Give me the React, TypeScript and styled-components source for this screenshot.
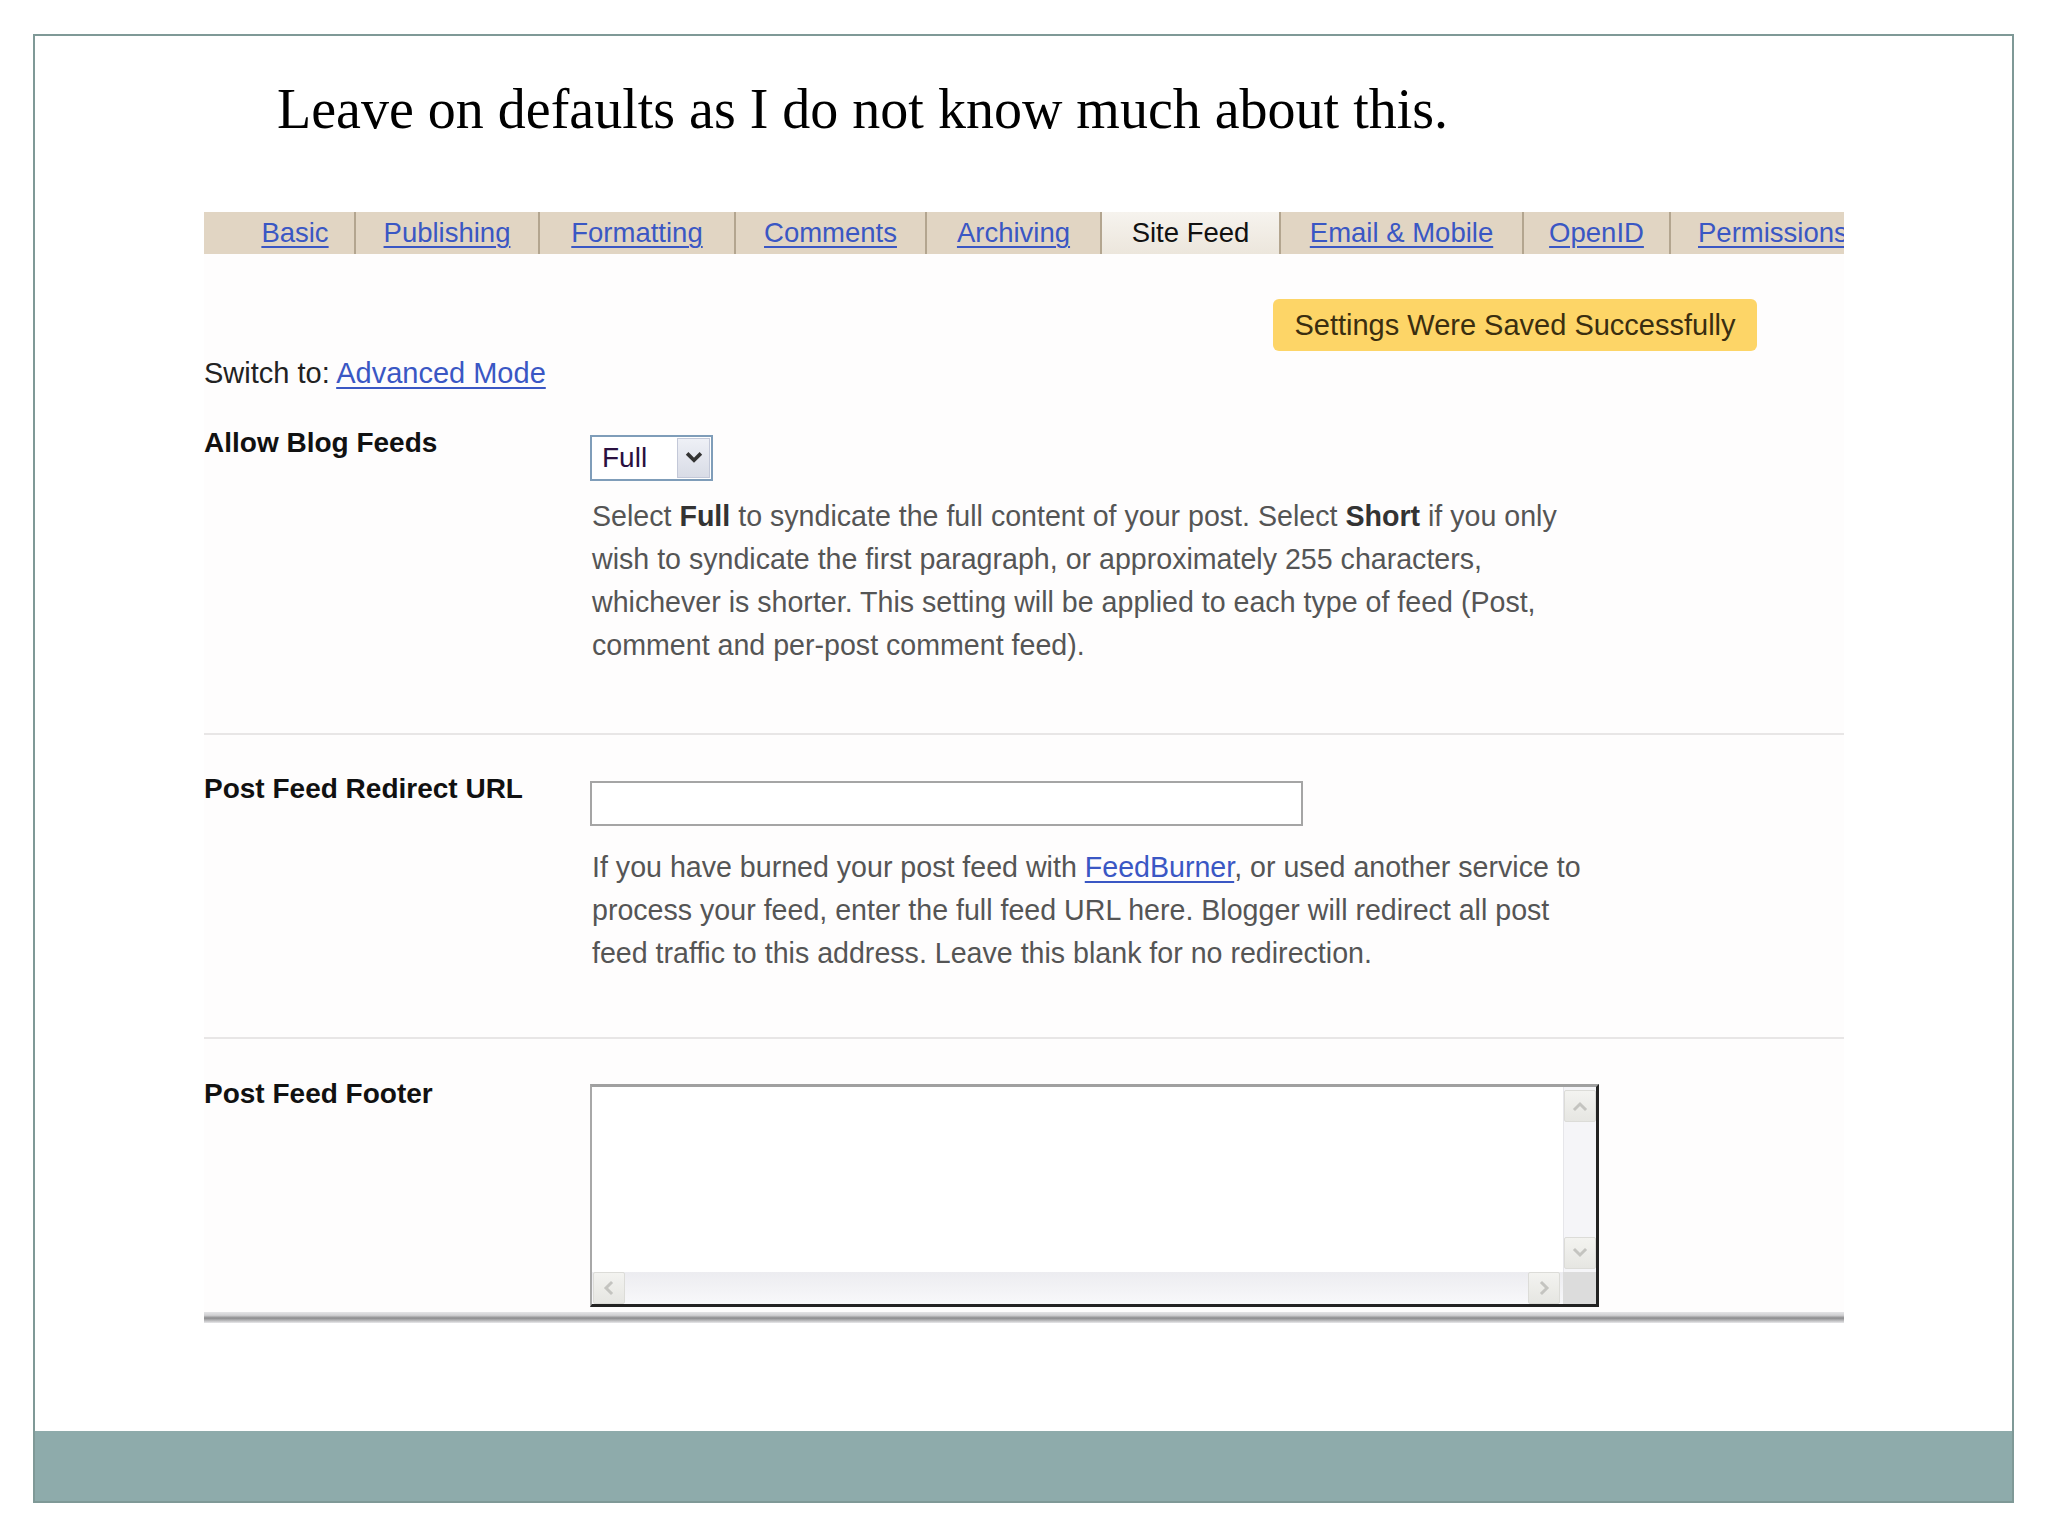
import React from "react";
import styled, { createGlobalStyle } from "styled-components";

const Global = createGlobalStyle`
  html, body { margin: 0; padding: 0; background: #ffffff; }
  body { width: 2048px; height: 1536px; overflow: hidden; }
`;

const Frame = styled.div`
  box-sizing: border-box;
  margin: 34px 0 0 33px;
  width: 1981px;
  height: 1469px;
  border: 2px solid #7f9997;
  display: flex;
  flex-direction: column;
  background: #ffffff;
`;

const Title = styled.h1`
  margin: 45px 0 0 0;
  padding-left: 242px;
  font-family: "Liberation Serif", "Times New Roman", serif;
  font-weight: 400;
  font-size: 56px;
  line-height: 56px;
  color: #000;
`;

const Panel = styled.div`
  margin: 75px 0 0 169px;
  width: 1640px;
  font-family: "Liberation Sans", Arial, sans-serif;
  background: #fefdfd;
`;

const TabBar = styled.nav`
  display: flex;
  height: 42px;
  background: #e1d5c3;
  overflow: hidden;
  white-space: nowrap;
`;

const Tab = styled.a<{ $active?: boolean; $first?: boolean; $w?: number }>`
  box-sizing: border-box;
  display: flex;
  align-items: center;
  justify-content: center;
  flex: none;
  width: ${(p) => (p.$w ? `${p.$w}px` : "auto")};
  padding: 0 ${(p) => (p.$w ? "0" : "27px")} 0 ${(p) => (p.$first ? "32px" : p.$w ? "0" : "27px")};
  border-right: 2px solid #b3a58f;
  font-size: 27.5px;
  color: ${(p) => (p.$active ? "#111" : "#3a57c4")};
  text-decoration: ${(p) => (p.$active ? "none" : "underline")};
  text-underline-offset: 4px;
  text-decoration-thickness: 2px;
  background: ${(p) => (p.$active ? "linear-gradient(#f6f3ee, #ece6dc)" : "transparent")};
`;

const BadgeRow = styled.div`
  display: flex;
  justify-content: flex-end;
  padding: 45px 87px 0 0;
`;

const Badge = styled.div`
  height: 52px;
  width: 484px;
  box-sizing: border-box;
  display: flex;
  align-items: center;
  justify-content: center;
  background: #fdd567;
  border-radius: 6px;
  font-size: 29px;
  color: #3a2e10;
`;

const SwitchLine = styled.div`
  margin-top: 6px;
  line-height: 32px;
  font-size: 29px;
  color: #222;
`;

const Link = styled.a`
  color: #3a57c4;
  text-decoration: underline;
  text-underline-offset: 4px;
  text-decoration-thickness: 2px;
`;

const FormRow = styled.section<{ $top: number; $bottom: number; $line?: boolean }>`
  display: grid;
  grid-template-columns: 386px 1fr;
  padding: ${(p) => p.$top}px 0 ${(p) => p.$bottom}px 0;
  border-bottom: ${(p) => (p.$line ? "2px solid #e8e6e6" : "none")};
`;

const Label = styled.div<{ $offset: number }>`
  margin-top: ${(p) => p.$offset}px;
  font-weight: 700;
  font-size: 28px;
  line-height: 32px;
  color: #111;
`;

const Field = styled.div`
  display: flex;
  flex-direction: column;
  align-items: flex-start;
`;

const SelectBox = styled.div`
  box-sizing: border-box;
  width: 123px;
  height: 46px;
  border: 2px solid #7f9db9;
  background: #fff;
  display: flex;
  align-items: stretch;
  padding: 1px;
`;

const SelectValue = styled.span`
  flex: 1;
  display: flex;
  align-items: center;
  padding-left: 9px;
  font-size: 28px;
  color: #2a1040;
`;

const SelectButton = styled.span`
  width: 33px;
  box-sizing: border-box;
  border: 1px solid #c3c8d8;
  background: linear-gradient(#eef0f6, #d9dce6);
  display: flex;
  align-items: center;
  justify-content: center;
`;

const Help = styled.div<{ $gap: number }>`
  margin: ${(p) => p.$gap}px 0 0 2px;
  font-size: 28.6px;
  line-height: 43px;
  color: #555;
  b {
    color: #333;
  }
`;

const HelpLine = styled.span`
  display: block;
  white-space: nowrap;
`;

const TextInput = styled.div`
  box-sizing: border-box;
  width: 713px;
  height: 45px;
  border: 2px solid #a5a5a5;
  background: #fff;
`;

const TextArea = styled.div`
  box-sizing: border-box;
  width: 1009px;
  height: 223px;
  border-style: solid;
  border-color: #a0a0a0 #222 #222 #a8a8a8;
  border-width: 3px 3px 3px 2px;
  background: #fff;
  display: grid;
  grid-template-columns: 1fr 33px;
  grid-template-rows: 1fr 32px;
`;

const VTrack = styled.div`
  background: #f5f5f8;
  border-left: 1px solid #e6e6ea;
  display: flex;
  flex-direction: column;
  justify-content: space-between;
  padding: 3px 0 3px 0;
`;

const HTrack = styled.div`
  background: linear-gradient(#ececf0, #f8f8fa);
  display: flex;
  justify-content: space-between;
  padding: 0 3px 0 1px;
`;

const ScrollBtn = styled.div`
  width: 32px;
  height: 32px;
  box-sizing: border-box;
  border: 1px solid #dcdcd8;
  border-radius: 2px;
  background: linear-gradient(#f3f3f0, #e6e6e2);
  display: flex;
  align-items: center;
  justify-content: center;
`;

const Corner = styled.div`
  background: #dcdcdc;
`;

const Rule = styled.div`
  margin-top: 5px;
  height: 11px;
  background: linear-gradient(#e4e4e6 0%, #d0d0d2 30%, #8a8a8c 55%, #b4b4b6 75%, #e8e8ea 100%);
`;

const Footer = styled.div`
  margin-top: auto;
  height: 70px;
  background: #8eabab;
`;

const Chevron = ({ dir, color, size = 16, w = 3 }: { dir: "up" | "down" | "left" | "right"; color: string; size?: number; w?: number }) => {
  const pts: Record<string, string> = {
    down: "3,5 8,10 13,5",
    up: "3,11 8,6 13,11",
    left: "10,3 5,8 10,13",
    right: "6,3 11,8 6,13",
  };
  return (
    <svg width={size} height={size} viewBox="0 0 16 16">
      <polyline points={pts[dir]} fill="none" stroke={color} strokeWidth={w} strokeLinecap="square" />
    </svg>
  );
};

const tabs: { label: string; w?: number }[] = [
  { label: "Basic", w: 152 },
  { label: "Publishing", w: 184 },
  { label: "Formatting", w: 196 },
  { label: "Comments", w: 191 },
  { label: "Archiving", w: 175 },
  { label: "Site Feed", w: 179 },
  { label: "Email & Mobile", w: 243 },
  { label: "OpenID", w: 147 },
  { label: "Permissions" },
];

export default function App() {
  return (
    <>
      <Global />
      <Frame>
        <Title>Leave on defaults as I do not know much about this.</Title>
        <Panel>
          <TabBar>
            {tabs.map((t, i) => (
              <Tab key={t.label} $first={i === 0} $w={t.w} $active={t.label === "Site Feed"}>
                {t.label}
              </Tab>
            ))}
          </TabBar>
          <BadgeRow>
            <Badge>Settings Were Saved Successfully</Badge>
          </BadgeRow>
          <SwitchLine>
            Switch to: <Link>Advanced Mode</Link>
          </SwitchLine>

          <FormRow $top={46} $bottom={66} $line>
            <Label $offset={-8}>Allow Blog Feeds</Label>
            <Field>
              <SelectBox>
                <SelectValue>Full</SelectValue>
                <SelectButton>
                  <Chevron dir="down" color="#333" size={18} w={3.2} />
                </SelectButton>
              </SelectBox>
              <Help $gap={14}>
                <HelpLine>
                  Select <b>Full</b> to syndicate the full content of your post. Select <b>Short</b> if you only
                </HelpLine>
                <HelpLine>wish to syndicate the first paragraph, or approximately 255 characters,</HelpLine>
                <HelpLine>whichever is shorter. This setting will be applied to each type of feed (Post,</HelpLine>
                <HelpLine>comment and per-post comment feed).</HelpLine>
              </Help>
            </Field>
          </FormRow>

          <FormRow $top={46} $bottom={62} $line>
            <Label $offset={-8}>Post Feed Redirect URL</Label>
            <Field>
              <TextInput />
              <Help $gap={20}>
                <HelpLine>
                  If you have burned your post feed with <Link>FeedBurner</Link>, or used another service to
                </HelpLine>
                <HelpLine>process your feed, enter the full feed URL here. Blogger will redirect all post</HelpLine>
                <HelpLine>feed traffic to this address. Leave this blank for no redirection.</HelpLine>
              </Help>
            </Field>
          </FormRow>

          <FormRow $top={45} $bottom={0}>
            <Label $offset={-6}>Post Feed Footer</Label>
            <Field>
              <TextArea>
                <div />
                <VTrack>
                  <ScrollBtn>
                    <Chevron dir="up" color="#c4c4c0" />
                  </ScrollBtn>
                  <ScrollBtn>
                    <Chevron dir="down" color="#c4c4c0" />
                  </ScrollBtn>
                </VTrack>
                <HTrack>
                  <ScrollBtn>
                    <Chevron dir="left" color="#c4c4c0" />
                  </ScrollBtn>
                  <ScrollBtn>
                    <Chevron dir="right" color="#c4c4c0" />
                  </ScrollBtn>
                </HTrack>
                <Corner />
              </TextArea>
            </Field>
          </FormRow>
          <Rule />
        </Panel>
        <Footer />
      </Frame>
    </>
  );
}
